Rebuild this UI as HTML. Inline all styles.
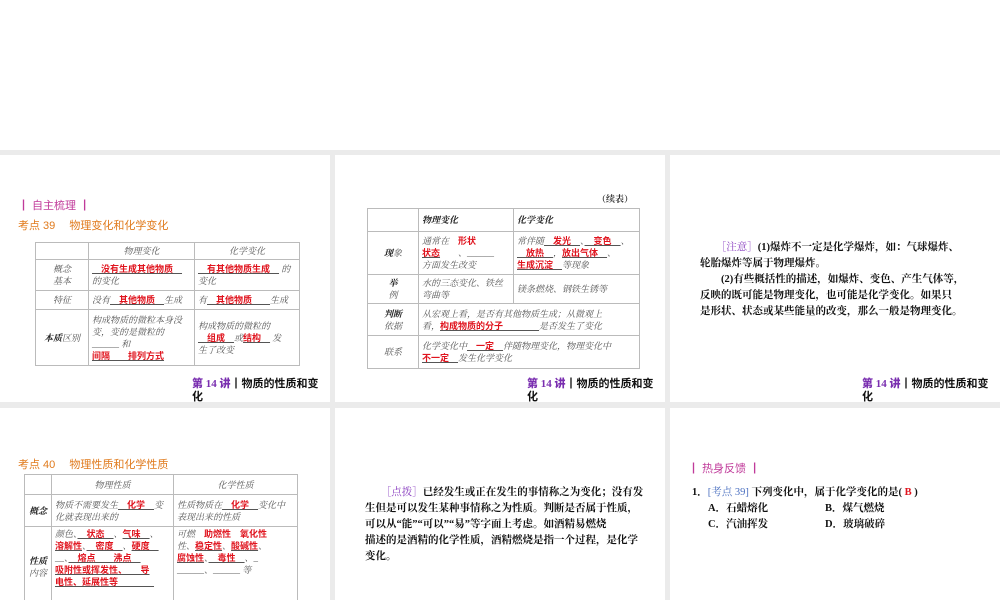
<!DOCTYPE html>
<html><head><meta charset="utf-8"><style>
*{margin:0;padding:0;box-sizing:border-box}
body{width:1000px;height:600px;background:#fff;position:relative;overflow:hidden;font-family:"Liberation Serif","Noto Serif CJK SC",serif}
.bg{position:absolute;left:0;top:150px;width:1000px;height:450px;background:#ebebeb}
.p{position:absolute;background:#fff;overflow:hidden}
.a{position:absolute;white-space:nowrap}
.sec{color:#c03a9a;font-family:"Liberation Sans","Noto Sans CJK SC",sans-serif;font-size:11px}
.kd{color:#e07a1c;font-family:"Liberation Sans","Noto Sans CJK SC",sans-serif;font-size:11px}
.ft{font-size:11px;font-family:"Liberation Serif","Noto Sans CJK SC",serif;font-weight:bold;line-height:13px;color:#111}
.ft b{color:#7a2fb0}
table{position:absolute;border-collapse:collapse;font-size:9px;color:#555;font-style:italic;line-height:12px}
td{border:1px solid #bbb;vertical-align:middle;padding:1px 3px}
.c{text-align:center}
.r{color:#e0141e;font-style:normal;font-weight:bold;font-family:"Liberation Sans","Noto Sans CJK SC",sans-serif;text-decoration:underline;text-decoration-color:#555}
.k{font-weight:bold;color:#222}
.txt{font-size:10.5px;line-height:16px;color:#111;font-weight:bold;font-family:"Liberation Serif","Noto Serif CJK SC",serif}
</style></head><body>
<div class="bg"></div>

<!-- panel 1 -->
<div class="p" style="left:0;top:155px;width:330px;height:247px">
<div class="a sec" style="left:18px;top:42px">┃ 自主梳理 ┃</div>
<div class="a kd" style="left:18px;top:62px">考点 39　 物理变化和化学变化</div>
<table style="left:35px;top:87px;width:265px">
<tr style="height:17px"><td style="width:53px"></td><td class="c" style="width:106px">物理变化</td><td class="c">化学变化</td></tr>
<tr style="height:31px"><td class="c">概念<br>基本</td><td><span class="r">　没有生成其他物质　</span><br>的变化</td><td><span class="r">　有其他物质生成　</span> 的<br>变化</td></tr>
<tr style="height:19px"><td class="c">特征</td><td>没有<span class="r">　其他物质　</span>生成</td><td>有<span class="r">　其他物质　　</span>生成</td></tr>
<tr style="height:56px"><td class="c"><span class="k">本质</span>区别</td><td>构成物质的微粒本身没变，变的是微粒的<br>______ 和<br><span class="r">间隔　　排列方式</span></td><td>构成物质的微粒的<br><span class="r">　组成　</span>或<span class="r">结构　</span> 发<br>生了改变</td></tr>
</table>
<div class="a ft" style="left:192px;top:223px"><b>第 14 讲</b>┃物质的性质和变<br>化</div>
</div>

<!-- panel 2 -->
<div class="p" style="left:335px;top:155px;width:330px;height:247px">
<div class="a" style="left:262px;top:37px;font-size:9px;font-weight:bold;color:#333">（续表）</div>
<table style="left:32px;top:53px;width:273px">
<tr style="height:23px"><td style="width:51px"></td><td class="k" style="width:95px">物理变化</td><td class="k">化学变化</td></tr>
<tr style="height:43px"><td class="c"><span class="k">现</span>象</td><td>通常在　<span class="r" style="text-decoration:none">形状</span><br><span class="r">状态</span>　　、______<br>方面发生改变</td><td>常伴随<span class="r">　发光　</span>、<span class="r">　变色　</span>、<br><span class="r">　放热　</span>，<span class="r">放出气体　</span>、<br><span class="r">生成沉淀　</span>等现象</td></tr>
<tr style="height:29px"><td class="c"><span class="k">举</span><br>例</td><td>水的三态变化、铁丝<br>弯曲等</td><td>镁条燃烧、钢铁生锈等</td></tr>
<tr style="height:32px"><td class="c"><span class="k">判断</span><br>依据</td><td colspan="2">从宏观上看，是否有其他物质生成；从微观上<br>看，<span class="r">构成物质的分子　　　　</span>是否发生了变化</td></tr>
<tr style="height:33px"><td class="c">联系</td><td colspan="2">化学变化中<span class="r">　一定　</span>伴随物理变化，物理变化中<br><span class="r">不一定　</span>发生化学变化</td></tr>
</table>
<div class="a ft" style="left:192px;top:223px"><b>第 14 讲</b>┃物质的性质和变<br>化</div>
</div>

<!-- panel 3 -->
<div class="p" style="left:670px;top:155px;width:330px;height:247px">
<div class="a txt" style="left:30px;top:85px">　　<span style="color:#8a3fc0;font-weight:normal">［注意］</span>(1)爆炸不一定是化学爆炸，如：气球爆炸、<br>轮胎爆炸等属于物理爆炸。<br>　　(2)有些概括性的描述，如爆炸、变色、产生气体等，<br>反映的既可能是物理变化，也可能是化学变化。如果只<br>是形状、状态或某些能量的改变，那么一般是物理变化。</div>
<div class="a ft" style="left:192px;top:223px"><b>第 14 讲</b>┃物质的性质和变<br>化</div>
</div>

<!-- panel 4 -->
<div class="p" style="left:0;top:408px;width:330px;height:192px">
<div class="a kd" style="left:18px;top:48px">考点 40　 物理性质和化学性质</div>
<table style="left:24px;top:66px;width:274px">
<tr style="height:20px"><td style="width:27px"></td><td class="c" style="width:122px">物理性质</td><td class="c">化学性质</td></tr>
<tr style="height:32px"><td class="c k">概念</td><td>物质不需要发生<span class="r">　化学　</span>变化就表现出来的</td><td>性质物质在<span class="r">　化学　</span>变化中表现出来的性质</td></tr>
<tr style="height:80px"><td class="c"><span class="k">性质</span><br>内容</td><td style="vertical-align:top">颜色、<span class="r">　状态　</span>、<span class="r">气味　</span>、<br><span class="r">溶解性</span>、<span class="r">　密度　</span>、<span class="r">硬度　</span><br>__、<span class="r">　熔点　　</span><span class="r">沸点　</span><br><span class="r">吸附性或挥发性、　　导</span><br><span class="r">电性、延展性等　　　　</span></td><td style="vertical-align:top">可燃　<span class="r" style="text-decoration:none">助燃性　氧化性</span><br>性、<span class="r">稳定性</span>、<span class="r">酸碱性</span>、<br><span class="r">腐蚀性</span>、<span class="r">　毒性　</span>、_<br>______、______ 等</td></tr>
</table>
</div>

<!-- panel 5 -->
<div class="p" style="left:335px;top:408px;width:330px;height:192px">
<div class="a txt" style="left:30px;top:77px">　　<span style="color:#8a3fc0;font-weight:normal">［点拨］</span>已经发生或正在发生的事情称之为变化；没有发<br>生但是可以发生某种事情称之为性质。判断是否属于性质，<br>可以从“能”“可以”“易”等字面上考虑。如酒精易燃烧<br>描述的是酒精的化学性质，酒精燃烧是指一个过程，是化学<br>变化。</div>
</div>

<!-- panel 6 -->
<div class="p" style="left:670px;top:408px;width:330px;height:192px">
<div class="a sec" style="left:18px;top:52px">┃ 热身反馈 ┃</div>
<div class="a txt" style="left:22px;top:77px">1．<span style="color:#4a6fc0;font-weight:normal">[考点 39]</span> 下列变化中，属于化学变化的是( <span style="color:#e0141e">B</span> )</div>
<div class="a txt" style="left:38px;top:93px">A．石蜡熔化</div>
<div class="a txt" style="left:155px;top:93px">B．煤气燃烧</div>
<div class="a txt" style="left:38px;top:109px">C．汽油挥发</div>
<div class="a txt" style="left:155px;top:109px">D．玻璃破碎</div>
</div>
</body></html>
